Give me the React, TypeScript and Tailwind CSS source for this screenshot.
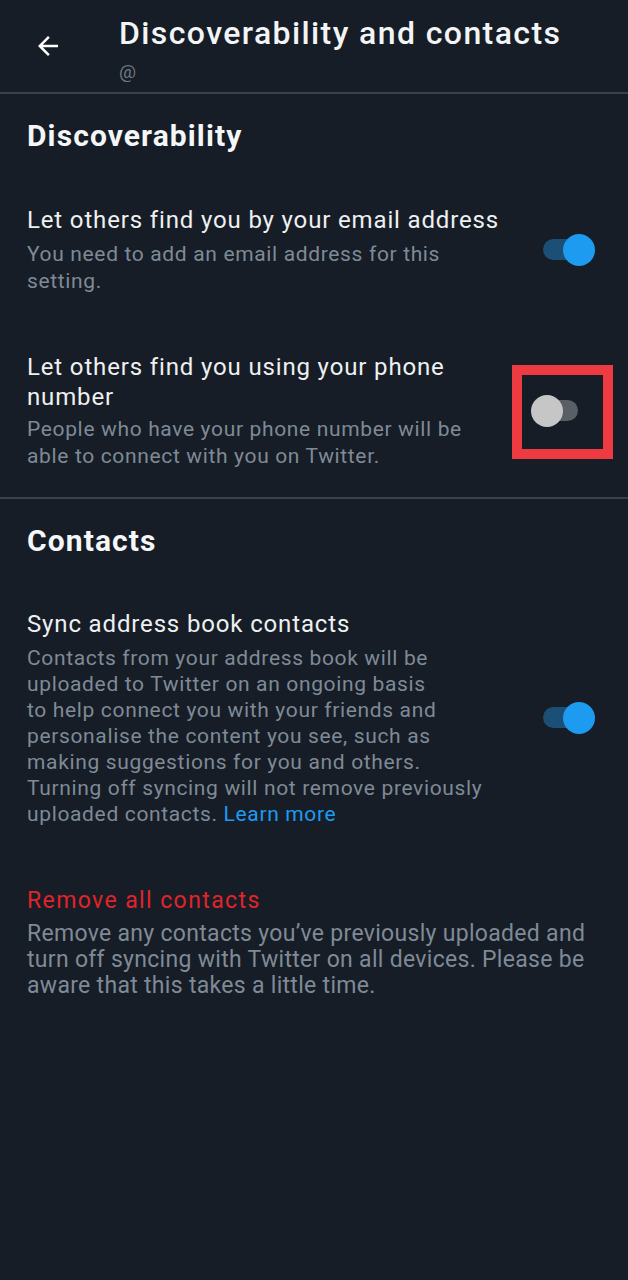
import React from "react";

const font = { fontFamily: "Roboto, 'Noto Sans', sans-serif" };

function Toggle({ on }: { on: boolean }) {
  return (
    <div className="relative h-[32px] w-[53px] shrink-0">
      <div
        className={`absolute left-[1px] right-[6px] top-[5px] h-[21px] rounded-full ${
          on ? "bg-[#1b4f76]" : "bg-[#5a5f66]"
        }`}
      />
      <div
        className={`absolute top-0 h-[32px] w-[32px] rounded-full ${
          on ? "right-0 bg-[#1d9bf0]" : "left-0 bg-[#c6c6c6]"
        }`}
      />
    </div>
  );
}

function Setting({
  title,
  children,
  toggle,
  gap = 6,
}: {
  title: React.ReactNode;
  children: React.ReactNode;
  toggle: React.ReactNode;
  gap?: number;
}) {
  return (
    <div className="flex items-center justify-between">
      <div className="w-[482px]">
        <div className="text-[24px] leading-[30px] tracking-[0.85px] text-[#eef0f2]">{title}</div>
        <div
          className={`${gap === 6 ? "mt-[6px]" : "mt-[4px]"} w-[462px] text-[21px] leading-[26.5px] tracking-[0.65px] text-[#7f8a96]`}
        >
          {children}
        </div>
      </div>
      {toggle}
    </div>
  );
}

export default function App() {
  return (
    <div style={font} className="min-h-[1280px] w-full bg-[#161d26] text-white">
      {/* Header */}
      <header className="flex h-[92px] items-start">
        <div className="flex h-[92px] w-[119px] items-center pl-[33px]">
          <svg viewBox="0 0 24 24" className="h-[30px] w-[30px] fill-white">
            <path d="M20 11H7.83l5.59-5.59L12 4l-8 8 8 8 1.41-1.41L7.83 13H20v-2z" />
          </svg>
        </div>
        <div className="pt-[14px]">
          <h1 className="text-[32px] font-medium leading-[38px] tracking-[1.4px] text-[#f2f4f6]">
            Discoverability and contacts
          </h1>
          <div className="mt-[8px] text-[19px] leading-[24px] text-[#6e7882]">@</div>
        </div>
      </header>
      <div className="h-[2px] bg-[#39424c]" />

      <section className="px-[27px] pb-[28px] pt-[24px]">
        <h2 className="text-[30px] font-bold leading-[36px] tracking-[1.1px] text-[#f4f6f8]">
          Discoverability
        </h2>
        <div className="mt-[51px] pr-[6px]">
          <Setting title="Let others find you by your email address" toggle={<Toggle on />}>
            You need to add an email address for this setting.
          </Setting>
        </div>
        <div className="mt-[58px] pr-[6px]">
          <Setting
            gap={4}
            title="Let others find you using your phone number"
            toggle={
              <div className="relative mr-[11px]">
                <Toggle on={false} />
                <div className="absolute left-[-19px] top-[-30px] h-[94px] w-[101px] border-[10px] border-[#ee3a41]" />
              </div>
            }
          >
            People who have your phone number will be able to connect with you on Twitter.
          </Setting>
        </div>
      </section>
      <div className="h-[2px] bg-[#39424c]" />

      <section className="px-[27px] pt-[24px]">
        <h2 className="text-[30px] font-bold leading-[36px] tracking-[1.1px] text-[#f4f6f8]">Contacts</h2>
        <div className="mt-[50px] pr-[6px]">
          <div className="flex items-center justify-between">
            <div className="w-[482px]">
              <div className="text-[24px] leading-[30px] tracking-[0.85px] text-[#eef0f2]">
                Sync address book contacts
              </div>
              <div className="mt-[6px] text-[21px] leading-[26px] tracking-[0.65px] text-[#7f8a96]">
                Contacts from your address book will be
                <br />
                uploaded to Twitter on an ongoing basis
                <br />
                to help connect you with your friends and
                <br />
                personalise the content you see, such as
                <br />
                making suggestions for you and others.
                <br />
                Turning off syncing will not remove previously
                <br />
                uploaded contacts. <span className="text-[#1d9bf0]">Learn more</span>
              </div>
            </div>
            <Toggle on />
          </div>
        </div>

        <div className="mt-[59px]">
          <div className="text-[23px] leading-[30px] tracking-[1.4px] text-[#e0242b]">Remove all contacts</div>
          <div className="mt-[5px] w-[575px] text-[23px] leading-[26px] tracking-[0.3px] text-[#7f8a96]">
            Remove any contacts you’ve previously uploaded and turn off syncing with Twitter on all
            devices. Please be aware that this takes a little time.
          </div>
        </div>
      </section>
    </div>
  );
}
